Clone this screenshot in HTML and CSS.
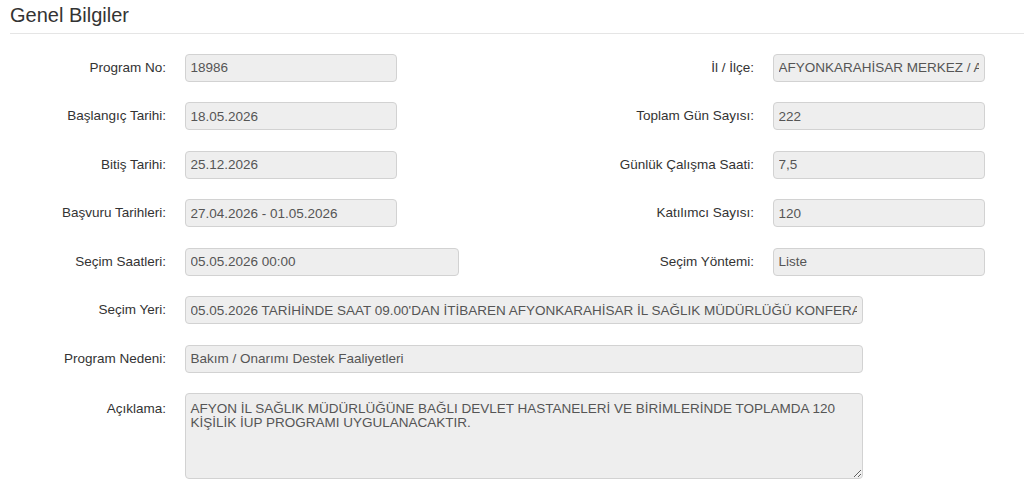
FILE: index.html
```html
<!DOCTYPE html>
<html lang="tr">
<head>
    <meta charset="UTF-8">
    <meta name="viewport" content="width=device-width, initial-scale=1.0">
    <title>Genel Bilgiler</title>
    <link rel="stylesheet" href="styles.css">
</head>
<body>
    <div class="panel">
        <h4 class="panelTitle">Genel Bilgiler</h4>

        <div class="form">
            <div class="formRow">
                <div class="field">
                    <label class="fieldLabel">Program No:</label>
                    <input class="fieldInput" type="text" readonly value="18986">
                </div>
                <div class="field">
                    <label class="fieldLabel">İl / İlçe:</label>
                    <input class="fieldInput" type="text" readonly value="AFYONKARAHİSAR MERKEZ / AFYONKARAHİSAR">
                </div>
            </div>

            <div class="formRow">
                <div class="field">
                    <label class="fieldLabel">Başlangıç Tarihi:</label>
                    <input class="fieldInput" type="text" readonly value="18.05.2026">
                </div>
                <div class="field">
                    <label class="fieldLabel">Toplam Gün Sayısı:</label>
                    <input class="fieldInput" type="text" readonly value="222">
                </div>
            </div>

            <div class="formRow">
                <div class="field">
                    <label class="fieldLabel">Bitiş Tarihi:</label>
                    <input class="fieldInput" type="text" readonly value="25.12.2026">
                </div>
                <div class="field">
                    <label class="fieldLabel">Günlük Çalışma Saati:</label>
                    <input class="fieldInput" type="text" readonly value="7,5">
                </div>
            </div>

            <div class="formRow">
                <div class="field">
                    <label class="fieldLabel">Başvuru Tarihleri:</label>
                    <input class="fieldInput" type="text" readonly value="27.04.2026 - 01.05.2026">
                </div>
                <div class="field">
                    <label class="fieldLabel">Katılımcı Sayısı:</label>
                    <input class="fieldInput" type="text" readonly value="120">
                </div>
            </div>

            <div class="formRow">
                <div class="field">
                    <label class="fieldLabel">Seçim Saatleri:</label>
                    <input class="fieldInput wide" type="text" readonly value="05.05.2026 00:00">
                </div>
                <div class="field">
                    <label class="fieldLabel">Seçim Yöntemi:</label>
                    <input class="fieldInput" type="text" readonly value="Liste">
                </div>
            </div>

            <div class="formRow">
                <div class="field">
                    <label class="fieldLabel">Seçim Yeri:</label>
                    <input class="fieldInput long" type="text" readonly value="05.05.2026 TARİHİNDE SAAT 09.00'DAN İTİBAREN AFYONKARAHİSAR İL SAĞLIK MÜDÜRLÜĞÜ KONFERANS SALONUNDA YAPILACAKTIR.">
                </div>
            </div>

            <div class="formRow">
                <div class="field">
                    <label class="fieldLabel">Program Nedeni:</label>
                    <input class="fieldInput long" type="text" readonly value="Bakım / Onarımı Destek Faaliyetleri">
                </div>
            </div>

            <div class="formRow">
                <div class="field top">
                    <label class="fieldLabel">Açıklama:</label>
                    <textarea class="fieldInput long area" readonly>AFYON İL SAĞLIK MÜDÜRLÜĞÜNE BAĞLI DEVLET HASTANELERİ VE BİRİMLERİNDE TOPLAMDA 120 KİŞİLİK İUP PROGRAMI UYGULANACAKTIR.</textarea>
                </div>
            </div>
        </div>
    </div>
</body>
</html>
```

FILE: styles.css
```css
body {
    margin: 0;
    font-family: "Liberation Sans", Arial, sans-serif;
    font-size: 13.5px;
    color: #333;
    background: #fff;
    overflow: hidden;
}
.panel {
    padding-left: 10px;
}
.panelTitle {
    margin: 3.5px 0 0;
    padding-bottom: 7.5px;
    font-size: 20px;
    font-weight: 400;
    line-height: 22px;
    border-bottom: 1px solid #e5e5e5;
}
.form {
    display: flex;
    flex-direction: column;
    gap: 20.5px;
    padding-top: 19.5px;
}
.formRow {
    display: flex;
}
.field {
    display: flex;
    flex: none;
    align-items: center;
}
.formRow .field:first-child:not(:last-child) {
    width: 588px;
}
.field.top {
    align-items: flex-start;
}
.fieldLabel {
    flex: none;
    width: 174.5px;
    box-sizing: border-box;
    padding-right: 18.5px;
    text-align: right;
    line-height: 16px;
}
.field.top .fieldLabel {
    padding-top: 8px;
}
.fieldInput {
    width: 212.5px;
    height: 28px;
    box-sizing: border-box;
    margin: 0;
    padding: 0 5px;
    border: 1px solid #d2d2d2;
    border-radius: 4px;
    background: #eee;
    color: #555;
    font-family: inherit;
    font-size: 13.5px;
    outline: none;
}
.fieldInput.wide {
    width: 274.5px;
}
.fieldInput.long {
    width: 678px;
}
.fieldInput.area {
    height: 86px;
    padding: 8px 5px;
    line-height: 14px;
    resize: vertical;
    overflow: hidden;
}
```
